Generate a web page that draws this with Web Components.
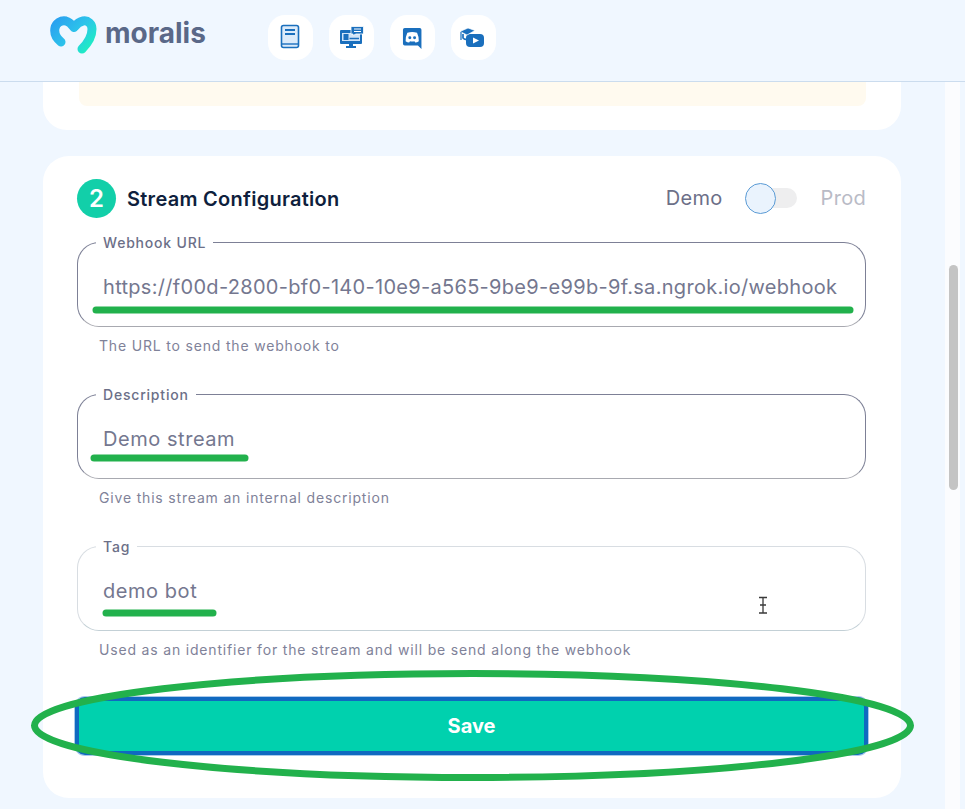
<!DOCTYPE html>
<html lang="en">
<head>
<meta charset="utf-8">
<title>Stream Configuration</title>
<style>
  html, body { margin: 0; height: 100%; }
  body {
    width: 965px;
    height: 809px;
    overflow: hidden;
    position: relative;
    background: #f0f7ff;
    font-family: Inter, "Liberation Sans", sans-serif;
  }
  .page { display: flex; height: 727px; }
  .content { width: 945px; display: flex; flex-direction: column; gap: 26px; padding-left: 43px; box-sizing: border-box; }
</style>
</head>
<body>
<app-header>
  <nav-icon kind="book"></nav-icon>
  <nav-icon kind="demo"></nav-icon>
  <nav-icon kind="discord"></nav-icon>
  <nav-icon kind="academy"></nav-icon>
</app-header>
<div class="page">
  <div class="content">
    <notice-card></notice-card>
    <config-card step="2" heading="Stream Configuration">
      <mode-toggle slot="aside"></mode-toggle>
      <form-field label="Webhook URL" hint="The URL to send the webhook to" tight>https://f00d-2800-bf0-140-10e9-a565-9be9-e99b-9f.sa.ngrok.io/webhook</form-field>
      <form-field label="Description" hint="Give this stream an internal description">Demo stream</form-field>
      <form-field label="Tag" hint="Used as an identifier for the stream and will be send along the webhook" faded>demo bot</form-field>
      <save-button>Save</save-button>
    </config-card>
  </div>
  <scroll-track></scroll-track>
</div>
<ink-marks></ink-marks>

<script>
class AppHeader extends HTMLElement {
  constructor() {
    super();
    this.attachShadow({ mode: "open" });
  }
  connectedCallback() {
    this.shadowRoot.innerHTML = `
      <style>
        :host { display: flex; align-items: flex-start; height: 81px; border-bottom: 1px solid #cbdcee; box-sizing: content-box; background: #f0f7ff; }
        .logo { display: flex; align-items: center; gap: 8px; margin: 15px 0 0 49px; width: 219px; height: 40px; }
        .word { font: 700 28px/1 Inter, "Liberation Sans", sans-serif; color: #5a6888; position: relative; top: -2px; }
        .icons { display: flex; gap: 16px; margin-top: 15px; }
        svg { display: block; }
      </style>
      <div class="logo">
        <svg width="48" height="40" viewBox="48 15 48 40">
          <defs>
            <linearGradient id="mg" gradientUnits="userSpaceOnUse" x1="52" y1="20" x2="86" y2="52">
              <stop offset="0" stop-color="#2a9ff0"/>
              <stop offset=".55" stop-color="#2cc4ea"/>
              <stop offset="1" stop-color="#1eeec2"/>
            </linearGradient>
          </defs>
          <path d="M60 42C55 38 53 33 54 28C55 23 60 20 65 21C69 22 71 25 73 27.500C75 25 77 22 82 21C87 20 91 24 91 29C91 37 86 44 81 49" fill="none" stroke="url(#mg)" stroke-width="9" stroke-linecap="round" stroke-linejoin="round"/>
        </svg>
        <span class="word">moralis</span>
      </div>
      <div class="icons"><slot></slot></div>`;
  }
}
customElements.define("app-header", AppHeader);

const NAV_ICONS = {
  book: `<rect x="13.500" y="10.500" width="17" height="22" rx="2" fill="#dcebfa" stroke="#1a6fbd" stroke-width="1.600"/>
         <path d="M13.500 29H30.500" stroke="#1a6fbd" stroke-width="1.400"/>
         <path d="M17 15H27M17 19H27" stroke="#1a6fbd" stroke-width="1.800"/>`,
  demo: `<rect x="11" y="15" width="22" height="14" rx="1" fill="#1a6fbd"/>
         <rect x="13" y="18" width="18" height="8" fill="#cfe3f7"/>
         <rect x="14.500" y="19" width="5" height="6" fill="#1a6fbd"/>
         <path d="M20.500 23.500H30" stroke="#1a6fbd" stroke-width="1.500"/>
         <path d="M20 29H24V31H27V33H17V31H20Z" fill="#1a6fbd"/>
         <path d="M22 11.500H34.500V19H27L24 20.500V19H22Z" fill="#1a6fbd" stroke="#fff" stroke-width=".8"/>
         <path d="M25 14H32M25 16.500H32" stroke="#fff" stroke-width="1"/>`,
  discord: `<g transform="translate(2.400 4.200) scale(.88)">
              <path d="M14 10H31Q33 10 33 12V34L29 30H14Q12 30 12 28V12Q12 10 14 10Z" fill="#1a6fbd"/>
              <path d="M17 15.500Q22.500 13.500 28 15.500Q30 19.500 30 25Q28 26.500 26 26.500L25 25Q22.500 25.700 20 25L19 26.500Q17 26.500 15 25Q15 19.500 17 15.500Z" fill="#fff"/>
              <circle cx="19.800" cy="21" r="1.700" fill="#1a6fbd"/>
              <circle cx="25.200" cy="21" r="1.700" fill="#1a6fbd"/>
            </g>`,
  academy: `<rect x="15" y="19" width="18" height="13" rx="4" fill="#1a6fbd"/>
            <path d="M22 22.500L28 25.500L22 28.500Z" fill="#fff"/>
            <path d="M9 16.500L17 13L24 15.500L16 20Z" fill="#1a6fbd" stroke="#fff" stroke-width=".7"/>
            <path d="M12 19V23Q14 25 15.500 24" fill="none" stroke="#1a6fbd" stroke-width="1.700"/>
            <path d="M10 17V25" stroke="#1a6fbd" stroke-width="1.200"/>`
};

class NavIcon extends HTMLElement {
  constructor() {
    super();
    this.attachShadow({ mode: "open" });
  }
  connectedCallback() {
    const kind = this.getAttribute("kind");
    this.shadowRoot.innerHTML = `
      <style>
        :host { display: block; width: 45px; height: 45px; background: #fff; border-radius: 17px; }
        svg { display: block; }
      </style>
      <svg width="45" height="45" viewBox="0 0 45 45">${NAV_ICONS[kind] || ""}</svg>`;
  }
}
customElements.define("nav-icon", NavIcon);

class NoticeCard extends HTMLElement {
  constructor() {
    super();
    this.attachShadow({ mode: "open" });
  }
  connectedCallback() {
    this.shadowRoot.innerHTML = `
      <style>
        :host { display: block; width: 858px; height: 48px; background: #fff; border-radius: 0 0 24px 24px; padding: 0 35px 0 36px; box-sizing: border-box; }
        .bar { height: 24px; background: #fffaef; border-radius: 0 0 8px 8px; }
      </style>
      <div class="bar"></div>`;
  }
}
customElements.define("notice-card", NoticeCard);

class ConfigCard extends HTMLElement {
  constructor() {
    super();
    this.attachShadow({ mode: "open" });
  }
  connectedCallback() {
    const step = this.getAttribute("step");
    const heading = this.getAttribute("heading");
    this.shadowRoot.innerHTML = `
      <style>
        :host { display: block; width: 858px; height: 642px; background: #fff; border-radius: 26px; padding: 23px 35px 0 34px; box-sizing: border-box; }
        .top { display: flex; align-items: center; justify-content: space-between; height: 38px; margin-bottom: 17px; }
        .title { display: flex; align-items: center; gap: 11px; }
        .step { width: 39px; height: 39px; border-radius: 50%; background: #12cfa9; color: #fff; display: flex; align-items: center; justify-content: center; font: 600 24px Inter, "Liberation Sans", sans-serif; }
        h2 { margin: 2px 0 0; font: 600 20px/1 Inter, "Liberation Sans", sans-serif; letter-spacing: .27px; color: #0f1f3d; }
      </style>
      <div class="top">
        <div class="title"><div class="step">${step}</div><h2>${heading}</h2></div>
        <slot name="aside"></slot>
      </div>
      <slot></slot>`;
  }
}
customElements.define("config-card", ConfigCard);

class ModeToggle extends HTMLElement {
  constructor() {
    super();
    this.attachShadow({ mode: "open" });
  }
  connectedCallback() {
    this.shadowRoot.innerHTML = `
      <style>
        :host { display: flex; align-items: center; font: 400 20px/1 Inter, "Liberation Sans", sans-serif; letter-spacing: .3px; color: #6c6f88; }
        .track { width: 48px; height: 20px; background: #eeeeef; border-radius: 10px; margin: 0 24px 0 26px; position: relative; }
        .knob { position: absolute; left: -4px; top: -5.500px; width: 31px; height: 31px; box-sizing: border-box; border-radius: 50%; background: #eaf3fd; border: 1.200px solid #5b9bd5; }
        .off { color: #b9bbc6; }
      </style>
      <span>Demo</span>
      <div class="track"><div class="knob"></div></div>
      <span class="off">Prod</span>`;
  }
}
customElements.define("mode-toggle", ModeToggle);

class FormField extends HTMLElement {
  constructor() {
    super();
    this.attachShadow({ mode: "open" });
  }
  connectedCallback() {
    const label = this.getAttribute("label");
    const hint = this.getAttribute("hint");
    this.shadowRoot.innerHTML = `
      <style>
        :host { display: block; margin-bottom: 32px; }
        fieldset { margin: 0; padding: 0 0 0 25px; height: 93px; box-sizing: border-box; border: 1px solid #7d8096; border-bottom-color: #a8a9b0; border-radius: 22px; display: flex; min-width: 0; }
        :host([faded]) fieldset { border-color: #d8dde2; border-bottom-color: #c3d0d6; }
        legend { margin-left: -7px; padding: 0 7px; font: 500 14px/17px Inter, "Liberation Sans", sans-serif; letter-spacing: .8px; color: #6c6f88; }
        .value { font: 400 20px/24px Inter, "Liberation Sans", sans-serif; letter-spacing: .55px; color: #74778f; margin-top: 24px; white-space: nowrap; }
        :host([tight]) .value { letter-spacing: .3px; }
        .hint { margin: 10px 0 0 22px; font: 400 14px/17px Inter, "Liberation Sans", sans-serif; letter-spacing: .82px; color: #7f8299; }
      </style>
      <fieldset>
        <legend>${label}</legend>
        <div class="value"><slot></slot></div>
      </fieldset>
      <div class="hint">${hint}</div>`;
  }
}
customElements.define("form-field", FormField);

class SaveButton extends HTMLElement {
  constructor() {
    super();
    this.attachShadow({ mode: "open" });
  }
  connectedCallback() {
    this.shadowRoot.innerHTML = `
      <style>
        :host { display: block; margin: 39px -2px 0 -2px; }
        button { display: block; width: 100%; height: 58px; box-sizing: border-box; border: 4px solid #1069c0; border-radius: 10px; background: #00d1ae; color: #fff; font: 700 20px Inter, "Liberation Sans", sans-serif; padding: 0; box-shadow: 0 0 0 1px #a9c9ea; }
      </style>
      <button type="button"><slot></slot></button>`;
  }
}
customElements.define("save-button", SaveButton);

class ScrollTrack extends HTMLElement {
  constructor() {
    super();
    this.attachShadow({ mode: "open" });
  }
  connectedCallback() {
    this.shadowRoot.innerHTML = `
      <style>
        :host { display: block; width: 15px; background: #fbfcfe; padding: 183px 2px 0 4px; box-sizing: border-box; }
        .thumb { width: 9px; height: 225px; border-radius: 5px; background: #c4c4c4; }
      </style>
      <div class="thumb"></div>`;
  }
}
customElements.define("scroll-track", ScrollTrack);

// hand-drawn green marks and the text cursor, laid over the page
class InkMarks extends HTMLElement {
  constructor() {
    super();
    this.attachShadow({ mode: "open" });
  }
  connectedCallback() {
    this.shadowRoot.innerHTML = `
      <style>
        :host { position: absolute; left: 0; top: 0; width: 965px; height: 809px; pointer-events: none; }
        svg { display: block; }
      </style>
      <svg width="965" height="809" viewBox="0 0 965 809" fill="none">
        <g stroke="#22b14c" stroke-width="7" stroke-linecap="round">
          <path d="M96 310H850"/>
          <path d="M94 458H245"/>
          <path d="M106 613H213"/>
        </g>
        <ellipse cx="472.500" cy="725.500" rx="438" ry="52" stroke="#22b14c" stroke-width="7"/>
        <path d="M759 597.500H763M767 597.500H763M763 597.500V613M759 613H767M760 605H766" stroke="#3a3a3a" stroke-width="1.300"/>
      </svg>`;
  }
}
customElements.define("ink-marks", InkMarks);
</script>
</body>
</html>
